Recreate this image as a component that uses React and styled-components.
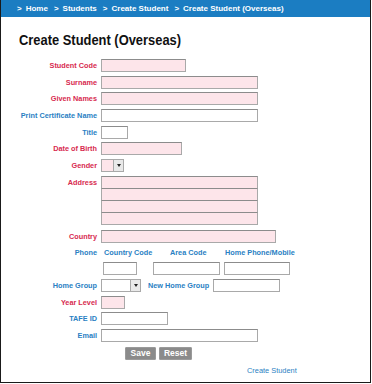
import React from 'react';
import styled, { createGlobalStyle } from 'styled-components';

const GlobalStyle = createGlobalStyle`
  html, body {
    margin: 0;
    padding: 0;
    background: #fff;
  }
  body {
    font-family: "Liberation Sans", Arial, sans-serif;
  }
`;

const Frame = styled.div`
  width: 369px;
  height: 382px;
  border: 1px solid #1a1a1a;
  border-top: none;
  background: #fff;
  position: relative;
  overflow: hidden;
`;

const Crumbs = styled.div`
  height: 17px;
  background: #1b7dc2;
  display: flex;
  align-items: center;
  padding-left: 16px;
  color: #fff;
  font-weight: bold;
  font-size: 8px;
`;

const Sep = styled.span`
  margin-right: 4px;
`;

const Crumb = styled.span`
  margin-right: 6px;
`;

const Title = styled.h1`
  margin: 14px 0 0 18px;
  font-size: 15px;
  font-weight: bold;
  color: #111;
  line-height: 18px;
  transform: scaleX(0.86);
  transform-origin: left center;
  white-space: nowrap;
`;

const Form = styled.div`
  margin-top: 10px;
  display: flex;
  flex-direction: column;
  gap: 3.7px;
`;

const Row = styled.div`
  display: grid;
  grid-template-columns: 96px auto;
  column-gap: 4px;
  align-items: start;
  margin-top: ${p => p.$top || 0}px;
`;

const Label = styled.span`
  text-align: right;
  font-size: 7.3px;
  font-weight: bold;
  line-height: 13px;
  white-space: nowrap;
  color: ${p => (p.$required ? '#d72a4f' : '#2a7fc3')};
`;

const Field = styled.div`
  width: ${p => p.$w}px;
  height: 13px;
  box-sizing: border-box;
  border: 1px solid #a9a9a9;
  border-top-color: #8c8c8c;
  background: ${p => (p.$required ? '#fde5ea' : '#fff')};
`;

const Stack = styled.div`
  display: flex;
  flex-direction: column;
  & > div + div {
    margin-top: -1px;
  }
`;

const Inline = styled.div`
  display: flex;
  align-items: start;
`;

const SelectBox = styled.div`
  width: ${p => p.$w}px;
  height: 13px;
  box-sizing: border-box;
  border: 1px solid #a9a9a9;
  background: ${p => (p.$required ? '#fde5ea' : '#fff')};
  display: flex;
  justify-content: flex-end;
  margin-right: ${p => p.$mr || 0}px;
`;

const Arrow = styled.div`
  width: 10px;
  height: 11px;
  box-sizing: border-box;
  border-left: 1px solid #a9a9a9;
  background: #e9e9e9;
  display: flex;
  align-items: center;
  justify-content: center;
  &::after {
    content: '';
    border-left: 2.5px solid transparent;
    border-right: 2.5px solid transparent;
    border-top: 3px solid #222;
  }
`;

const InlineLabel = styled(Label)`
  margin-right: 4px;
`;

const PhoneGrid = styled.div`
  display: grid;
  grid-template-columns: 50px 71px auto;
  row-gap: 3px;
  padding-left: 3px;
`;

const PhoneHead = styled.span`
  font-size: 7.3px;
  font-weight: bold;
  color: #2a7fc3;
  line-height: 13px;
  white-space: nowrap;
  padding-left: ${p => p.$indent || 0}px;
`;

const PhoneField = styled(Field)`
  margin-left: -1px;
`;

const Buttons = styled.div`
  display: flex;
  gap: 3px;
  padding-left: 124px;
  margin-top: 1px;
`;

const Button = styled.button`
  height: 13px;
  width: ${p => p.$w}px;
  padding: 0;
  border: 1px solid #9a9a9a;
  border-radius: 1px;
  background: #8b8b8b;
  color: #fff;
  font-family: "Liberation Sans", Arial, sans-serif;
  font-weight: bold;
  font-size: 8.5px;
  line-height: 11px;
`;

const FooterLink = styled.a`
  display: block;
  margin: 6px 0 0 246px;
  font-size: 7.4px;
  color: #2a7fc3;
  text-decoration: none;
`;

const required = { $required: true };

const crumbs = ['Home', 'Students', 'Create Student', 'Create Student (Overseas)'];

export default function App() {
  return (
    <>
      <GlobalStyle />
      <Frame>
        <Crumbs>
          {crumbs.map(c => (
            <React.Fragment key={c}>
              <Sep>&gt;</Sep>
              <Crumb>{c}</Crumb>
            </React.Fragment>
          ))}
        </Crumbs>
        <Title>Create Student (Overseas)</Title>
        <Form>
          <Row>
            <Label {...required}>Student Code</Label>
            <Field {...required} $w={85} />
          </Row>
          <Row>
            <Label {...required}>Surname</Label>
            <Field {...required} $w={157} />
          </Row>
          <Row>
            <Label {...required}>Given Names</Label>
            <Field {...required} $w={157} />
          </Row>
          <Row>
            <Label>Print Certificate Name</Label>
            <Field $w={157} />
          </Row>
          <Row>
            <Label>Title</Label>
            <Field $w={27} />
          </Row>
          <Row>
            <Label {...required}>Date of Birth</Label>
            <Field {...required} $w={81} />
          </Row>
          <Row>
            <Label {...required}>Gender</Label>
            <SelectBox {...required} $w={23}><Arrow /></SelectBox>
          </Row>
          <Row>
            <Label {...required}>Address</Label>
            <Stack>
              <Field {...required} $w={157} />
              <Field {...required} $w={157} />
              <Field {...required} $w={157} />
              <Field {...required} $w={157} />
            </Stack>
          </Row>
          <Row $top={1}>
            <Label {...required}>Country</Label>
            <Field {...required} $w={175} />
          </Row>
          <Row>
            <Label>Phone</Label>
            <PhoneGrid>
              <PhoneHead>Country Code</PhoneHead>
              <PhoneHead $indent={16}>Area Code</PhoneHead>
              <PhoneHead>Home Phone/Mobile</PhoneHead>
              <PhoneField $w={34} />
              <PhoneField $w={67} />
              <PhoneField $w={66} />
            </PhoneGrid>
          </Row>
          <Row>
            <Label>Home Group</Label>
            <Inline>
              <SelectBox $w={40} $mr={7}><Arrow /></SelectBox>
              <InlineLabel>New Home Group</InlineLabel>
              <Field $w={67} />
            </Inline>
          </Row>
          <Row>
            <Label {...required}>Year Level</Label>
            <Field {...required} $w={24} />
          </Row>
          <Row>
            <Label>TAFE ID</Label>
            <Field $w={67} />
          </Row>
          <Row>
            <Label>Email</Label>
            <Field $w={157} />
          </Row>
          <Buttons>
            <Button type="button" $w={31}>Save</Button>
            <Button type="button" $w={33}>Reset</Button>
          </Buttons>
        </Form>
        <FooterLink href="#">Create Student</FooterLink>
      </Frame>
    </>
  );
}
